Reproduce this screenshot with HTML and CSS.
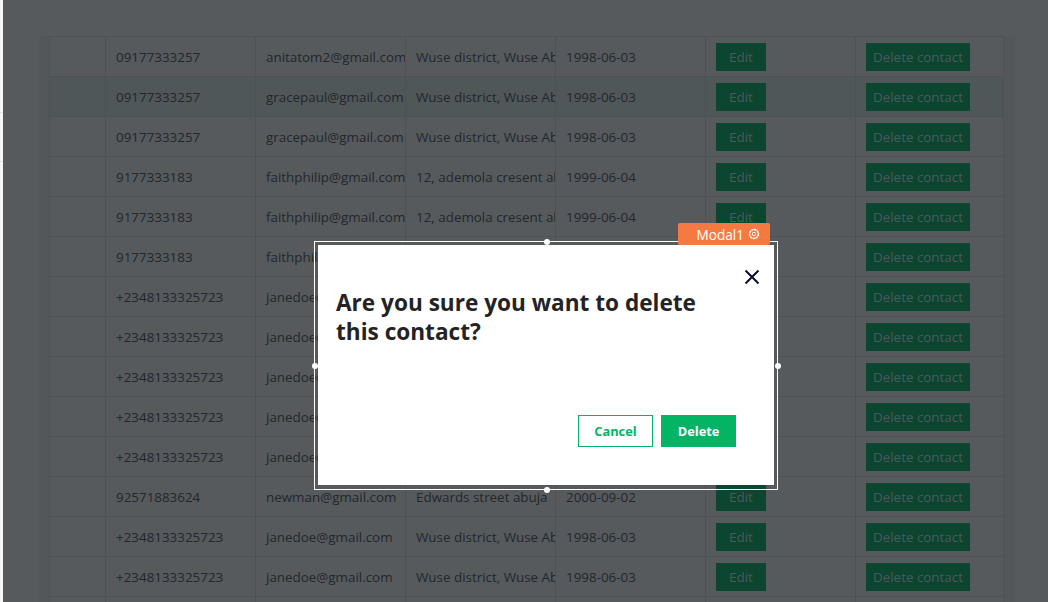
FILE: index.html
```html
<!DOCTYPE html>
<html lang="en">
<head>
<meta charset="utf-8">
<title>Contacts</title>
<link rel="stylesheet" href="styles.css">
</head>
<body>
<div class="strip"></div>
<main class="page">
  <div class="table-wrap">
    <table class="contacts">
      <colgroup><col class="c-a"><col class="c-b"><col class="c-c"><col class="c-d"><col class="c-e"><col class="c-f"><col class="c-g"></colgroup>
      <tbody>
        <tr><td></td><td>09177333257</td><td>anitatom2@gmail.com</td><td><span class="clip">Wuse district, Wuse Abuja</span></td><td>1998-06-03</td><td><button class="btn">Edit</button></td><td><button class="btn">Delete contact</button></td></tr>
        <tr class="hover"><td></td><td>09177333257</td><td>gracepaul@gmail.com</td><td><span class="clip">Wuse district, Wuse Abuja</span></td><td>1998-06-03</td><td><button class="btn">Edit</button></td><td><button class="btn">Delete contact</button></td></tr>
        <tr><td></td><td>09177333257</td><td>gracepaul@gmail.com</td><td><span class="clip">Wuse district, Wuse Abuja</span></td><td>1998-06-03</td><td><button class="btn">Edit</button></td><td><button class="btn">Delete contact</button></td></tr>
        <tr><td></td><td>9177333183</td><td>faithphilip@gmail.com</td><td><span class="clip">12, ademola cresent abuja</span></td><td>1999-06-04</td><td><button class="btn">Edit</button></td><td><button class="btn">Delete contact</button></td></tr>
        <tr><td></td><td>9177333183</td><td>faithphilip@gmail.com</td><td><span class="clip">12, ademola cresent abuja</span></td><td>1999-06-04</td><td><button class="btn">Edit</button></td><td><button class="btn">Delete contact</button></td></tr>
        <tr><td></td><td>9177333183</td><td>faithphilip@gmail.com</td><td><span class="clip">12, ademola cresent abuja</span></td><td>1999-06-04</td><td><button class="btn">Edit</button></td><td><button class="btn">Delete contact</button></td></tr>
        <tr><td></td><td>+2348133325723</td><td>janedoe@gmail.com</td><td><span class="clip">Wuse district, Wuse Abuja</span></td><td>1998-06-03</td><td><button class="btn">Edit</button></td><td><button class="btn">Delete contact</button></td></tr>
        <tr><td></td><td>+2348133325723</td><td>janedoe@gmail.com</td><td><span class="clip">Wuse district, Wuse Abuja</span></td><td>1998-06-03</td><td><button class="btn">Edit</button></td><td><button class="btn">Delete contact</button></td></tr>
        <tr><td></td><td>+2348133325723</td><td>janedoe@gmail.com</td><td><span class="clip">Wuse district, Wuse Abuja</span></td><td>1998-06-03</td><td><button class="btn">Edit</button></td><td><button class="btn">Delete contact</button></td></tr>
        <tr><td></td><td>+2348133325723</td><td>janedoe@gmail.com</td><td><span class="clip">Wuse district, Wuse Abuja</span></td><td>1998-06-03</td><td><button class="btn">Edit</button></td><td><button class="btn">Delete contact</button></td></tr>
        <tr><td></td><td>+2348133325723</td><td>janedoe@gmail.com</td><td><span class="clip">Wuse district, Wuse Abuja</span></td><td>1998-06-03</td><td><button class="btn">Edit</button></td><td><button class="btn">Delete contact</button></td></tr>
        <tr><td></td><td>92571883624</td><td>newman@gmail.com</td><td><span class="clip">Edwards street abuja</span></td><td>2000-09-02</td><td><button class="btn">Edit</button></td><td><button class="btn">Delete contact</button></td></tr>
        <tr><td></td><td>+2348133325723</td><td>janedoe@gmail.com</td><td><span class="clip">Wuse district, Wuse Abuja</span></td><td>1998-06-03</td><td><button class="btn">Edit</button></td><td><button class="btn">Delete contact</button></td></tr>
        <tr><td></td><td>+2348133325723</td><td>janedoe@gmail.com</td><td><span class="clip">Wuse district, Wuse Abuja</span></td><td>1998-06-03</td><td><button class="btn">Edit</button></td><td><button class="btn">Delete contact</button></td></tr>
        <tr><td></td><td></td><td></td><td></td><td></td><td></td><td></td></tr>
      </tbody>
    </table>
  </div>
</main>
<div class="selection">
  <span class="tag">Modal1
    <svg class="tag-icon" viewBox="0 0 12 12" aria-hidden="true"><circle cx="6" cy="6" r="4.4" fill="none" stroke="currentColor" stroke-width="1.5" stroke-dasharray="2.4 .5"/><circle cx="6" cy="6" r="1.7" fill="none" stroke="currentColor" stroke-width="1"/></svg>
  </span>
  <i class="handle h-top"></i><i class="handle h-left"></i><i class="handle h-right"></i><i class="handle h-bottom"></i>
  <section class="modal">
    <button class="close" aria-label="Close"><svg viewBox="0 0 16 16" aria-hidden="true"><path d="M1.5 1.5 14.5 14.5M14.5 1.5 1.5 14.5" fill="none" stroke="currentColor" stroke-width="2"/></svg></button>
    <h2 class="title">Are you sure you want to delete this contact?</h2>
    <div class="actions">
      <button class="action cancel">Cancel</button>
      <button class="action delete">Delete</button>
    </div>
  </section>
</div>
</body>
</html>
```
FILE: styles.css
```css
* { box-sizing: border-box; }
html, body { margin: 0; height: 100%; overflow: hidden; }
body {
  display: flex;
  height: 602px;
  background: #565a5d;
  font-family: "Open Sans", "Noto Sans", sans-serif;
  font-size: 13.4px;
  color: #24272b;
}
.strip {
  width: 3px;
  flex: none;
  background:
    linear-gradient(#e2e2e2, #e2e2e2) 0 112px / 100% 1px no-repeat,
    linear-gradient(#e2e2e2, #e2e2e2) 0 161px / 100% 1px no-repeat,
    #f6f6f6;
}
.page { flex: 1; padding: 36px 33px 0 36px; min-width: 0; }
.table-wrap { background: #53575a; padding: 0 10px; width: 976px; height: 566px; overflow: hidden; }
.contacts { border-collapse: collapse; table-layout: fixed; width: 954px; background: #565a5d; }
.c-a { width: 56px; }
.c-b { width: 150px; }
.c-c { width: 150px; }
.c-d { width: 150px; }
.c-e { width: 150px; }
.c-f { width: 150px; }
.c-g { width: 148px; }
.contacts td {
  height: 40px;
  padding: 0 10px;
  border: 1px solid #4e5255;
  white-space: nowrap;
  overflow: hidden;
}
.hover td { background: #505759; }
.clip { display: block; overflow: hidden; margin-right: -10px; }
.btn {
  display: block;
  height: 28px;
  min-width: 50px;
  padding: 0 7px;
  border: 0;
  background: #0c4530;
  color: #4a5a5c;
  font: inherit;
}
.selection {
  position: fixed;
  left: 314px;
  top: 241px;
  width: 464px;
  height: 249px;
  border: 1px solid #fff;
  padding: 3px;
}
.modal {
  position: relative;
  height: 240px;
  background: #fff;
  padding: 43px 18px 0;
  display: flex;
  flex-direction: column;
}
.title {
  margin: 0;
  width: 390px;
  font-size: 22.6px;
  line-height: 29px;
  font-weight: 700;
  color: #232326;
}
.close {
  position: absolute;
  right: 14px;
  top: 24px;
  width: 16px;
  height: 16px;
  padding: 0;
  border: 0;
  background: none;
  color: #0a0c30;
}
.close svg { display: block; width: 16px; height: 16px; }
.actions { display: flex; justify-content: flex-end; gap: 8px; margin-top: auto; padding: 0 20px 38px 0; }
.action {
  width: 75px;
  height: 32px;
  font: 700 12.8px "Open Sans", sans-serif;
}
.cancel { background: #fff; border: 1px solid #02b463; color: #02b463; }
.delete { background: #02b463; border: 0; color: #fff; }
.tag {
  position: absolute;
  right: 7px;
  top: -19px;
  width: 92px;
  height: 22px;
  display: flex;
  align-items: center;
  justify-content: flex-end;
  gap: 4px;
  padding-right: 10px;
  background: #f47a42;
  border-radius: 2px;
  color: #fff;
  font-size: 13.6px;
}
.tag-icon { width: 12px; height: 12px; }
.handle { position: absolute; width: 6px; height: 6px; border-radius: 50%; background: #fff; }
.h-top { left: 229px; top: -3px; }
.h-bottom { left: 229px; bottom: -4px; }
.h-left { left: -3px; top: 121px; }
.h-right { right: -4px; top: 121px; }
```
